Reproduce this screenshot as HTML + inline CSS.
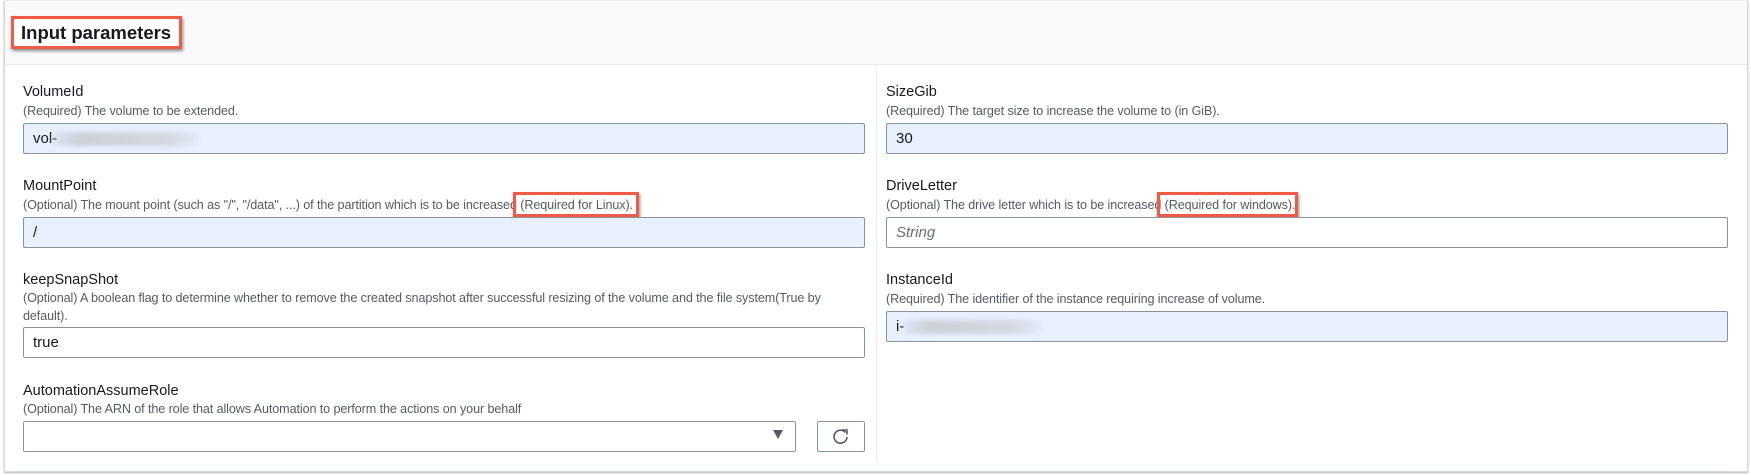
<!DOCTYPE html>
<html><head><meta charset="utf-8"><style>
*{box-sizing:border-box;margin:0;padding:0}
body{width:1751px;height:475px;background:#fff;font-family:"Liberation Sans",Arial,sans-serif;position:relative;overflow:hidden;color:#16191f}
.panel{position:absolute;left:4px;top:0;width:1744px;height:472px;border:1px solid #d5dbdb;border-top:1px solid #eaeded;box-shadow:0 1px 2px rgba(0,0,0,.3);background:#fff}
.hdr{position:absolute;left:0;top:0;right:0;height:64px;background:#fafafa;border-bottom:1px solid #eaeded}
.a{position:absolute;white-space:nowrap}
.lbl{font-size:14.5px;color:#16191f}
.desc{font-size:12.6px;color:#545b64;letter-spacing:-0.1px}
.inp{position:absolute;height:31px;border:1px solid #879596;border-radius:2px;font-size:15px;padding-left:9px;line-height:29px;background:#fff}
.fill{background:#e8f0fe}
.red{position:absolute;border:3px solid #f05a46;box-shadow:1px 2px 3px rgba(0,0,0,.45)}
.blur{position:absolute;height:14px;border-radius:7px;background:linear-gradient(90deg,rgba(200,204,212,.2),rgba(200,204,212,.9) 20%,rgba(210,214,222,.9) 80%,rgba(200,204,212,.1));filter:blur(2px)}
</style></head><body>
<div class="panel"><div class="hdr"></div></div>
<div class="red" style="left:11px;top:16px;width:171px;height:33px;background:#fff"></div>
<div class="a" style="left:21px;top:22px;font-size:18.5px;font-weight:bold">Input parameters</div>
<div style="position:absolute;left:876px;top:64px;width:1px;height:398px;background:#eaeded"></div>

<div class="a lbl" style="left:23px;top:84px">VolumeId</div>
<div class="a desc" style="left:23px;top:104px">(Required) The volume to be extended.</div>
<div class="inp fill" style="left:23px;top:123px;width:842px">vol-</div>
<div class="blur" style="left:50px;top:132px;width:150px"></div>

<div class="a lbl" style="left:23px;top:178px">MountPoint</div>
<div class="a desc" style="left:23px;top:198px">(Optional) The mount point (such as "/", "/data", ...) of the partition which is to be increased (Required for Linux).</div>
<div class="red" style="left:513px;top:192px;width:126px;height:25px"></div>
<div class="inp fill" style="left:23px;top:217px;width:842px">/</div>

<div class="a lbl" style="left:23px;top:272px">keepSnapShot</div>
<div class="a desc" style="left:23px;top:291px">(Optional) A boolean flag to determine whether to remove the created snapshot after successful resizing of the volume and the file system(True by</div>
<div class="a desc" style="left:23px;top:309px">default).</div>
<div class="inp" style="left:23px;top:327px;width:842px">true</div>

<div class="a lbl" style="left:23px;top:383px">AutomationAssumeRole</div>
<div class="a desc" style="left:23px;top:402px">(Optional) The ARN of the role that allows Automation to perform the actions on your behalf</div>
<div class="inp" style="left:23px;top:421px;width:773px"></div>
<div class="a" style="left:773px;top:430px;width:0;height:0;border-left:5px solid transparent;border-right:5px solid transparent;border-top:9px solid #545b64"></div>
<div class="inp" style="left:817px;top:421px;width:48px;padding:0"><svg width="46" height="29" viewBox="0 0 46 29"><path d="M27.5 10.5 A6.5 6.5 0 1 0 29 15" fill="none" stroke="#545b64" stroke-width="1.6"/><path d="M24 8 L29 8 L29 12.5" fill="none" stroke="#545b64" stroke-width="1.6"/></svg></div>

<div class="a lbl" style="left:886px;top:84px">SizeGib</div>
<div class="a desc" style="left:886px;top:104px">(Required) The target size to increase the volume to (in GiB).</div>
<div class="inp fill" style="left:886px;top:123px;width:842px">30</div>

<div class="a lbl" style="left:886px;top:178px">DriveLetter</div>
<div class="a desc" style="left:886px;top:198px">(Optional) The drive letter which is to be increased (Required for windows).</div>
<div class="red" style="left:1157px;top:192px;width:141px;height:25px"></div>
<div class="inp" style="left:886px;top:217px;width:842px;font-style:italic;color:#687078">String</div>

<div class="a lbl" style="left:886px;top:272px">InstanceId</div>
<div class="a desc" style="left:886px;top:292px">(Required) The identifier of the instance requiring increase of volume.</div>
<div class="inp fill" style="left:886px;top:311px;width:842px">i-</div>
<div class="blur" style="left:902px;top:320px;width:140px"></div>
</body></html>
